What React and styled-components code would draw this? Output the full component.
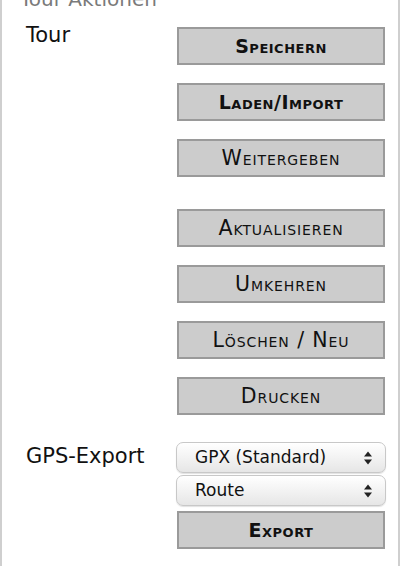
import React from "react";
import styled, { createGlobalStyle } from "styled-components";

const GlobalStyle = createGlobalStyle`
  html, body {
    margin: 0;
    padding: 0;
    background: #fff;
    overflow: hidden;
  }
  body {
    font-family: "DejaVu Sans", "Liberation Sans", sans-serif;
  }
`;

const Panel = styled.fieldset`
  box-sizing: border-box;
  width: 400px;
  min-height: 640px;
  margin: -25px 0 0 0;
  padding: 16px 13px 0 24px;
  border: 2px solid #cfcfcf;
  border-bottom: none;
`;

const Legend = styled.legend`
  margin-left: -8px;
  padding: 12px 2px 0;
  font-size: 20px;
  color: #7a7a7a;
`;

const Section = styled.div`
  display: grid;
  grid-template-columns: 151px 208px;
  align-items: start;
  margin-bottom: ${(p) => p.$after || 0}px;
`;

const Label = styled.div`
  font-size: 21px;
  line-height: 24px;
  color: #111;
  margin-top: ${(p) => p.$top || 0}px;
`;

const Stack = styled.div`
  display: flex;
  flex-direction: column;
`;

const Button = styled.button`
  box-sizing: border-box;
  width: 208px;
  height: 38px;
  margin-top: ${(p) => p.$gap || 0}px;
  padding: 0;
  border: 2px solid #9a9a9a;
  border-radius: 0;
  background: #cccccc;
  font-family: "DejaVu Sans", "Liberation Sans", sans-serif;
  font-size: ${(p) => (p.$bold ? 19 : 20.5)}px;
  font-weight: ${(p) => (p.$bold ? 700 : 400)};
  font-variant: small-caps;
  letter-spacing: ${(p) => (p.$bold ? 0.5 : 0.9)}px;
  color: #111;
  cursor: pointer;
`;

const SelectBox = styled.div`
  position: relative;
  box-sizing: border-box;
  width: 210px;
  height: 31px;
  margin-left: -1px;
  margin-top: ${(p) => p.$gap || 0}px;
  border: 1px solid #c8c8c8;
  border-radius: 7px;
  background: linear-gradient(#ffffff 0%, #f4f4f4 45%, #e6e6e6 100%);
  box-shadow: inset 0 1px 0 #fff, 0 1px 1px rgba(0, 0, 0, 0.12);
  font-size: 17px;
  line-height: 29px;
  padding-left: 18px;
  color: #111;
`;

const Arrows = styled.svg`
  position: absolute;
  right: 13px;
  top: 8px;
`;

const Select = ({ children, gap }) => (
  <SelectBox $gap={gap}>
    {children}
    <Arrows width="8" height="14" viewBox="0 0 8 14">
      <path d="M4 0.5 L8 5.5 L0 5.5 Z M0 8.5 L8 8.5 L4 13.5 Z" fill="#222" />
    </Arrows>
  </SelectBox>
);

export default function App() {
  return (
    <>
      <GlobalStyle />
      <Panel>
        <Legend>Tour Aktionen</Legend>
        <Section $after={27}>
          <Label $top={-4}>Tour</Label>
          <Stack>
            <Button $bold>Speichern</Button>
            <Button $bold $gap={18}>Laden/Import</Button>
            <Button $gap={18}>Weitergeben</Button>
            <Button $gap={32}>Aktualisieren</Button>
            <Button $gap={18}>Umkehren</Button>
            <Button $gap={18}>Löschen / Neu</Button>
            <Button $gap={18}>Drucken</Button>
          </Stack>
        </Section>
        <Section>
          <Label $top={2}>GPS-Export</Label>
          <Stack>
            <Select>GPX (Standard)</Select>
            <Select gap={2}>Route</Select>
            <Button $bold $gap={5}>Export</Button>
          </Stack>
        </Section>
      </Panel>
    </>
  );
}
